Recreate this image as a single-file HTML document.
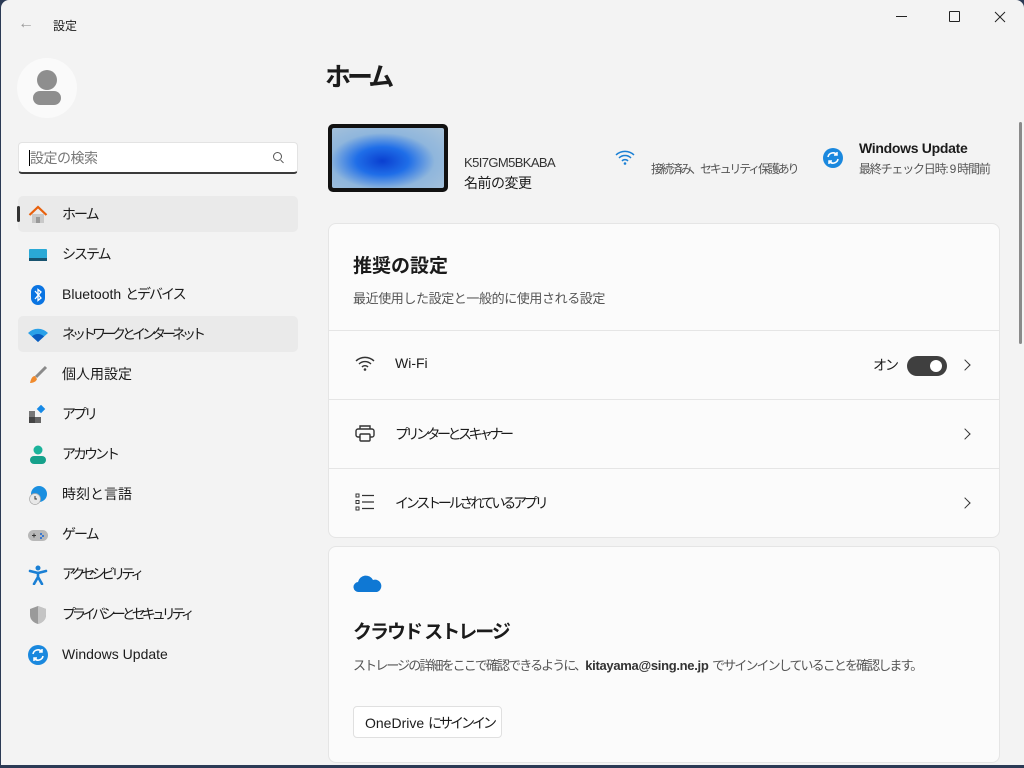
<!DOCTYPE html>
<html><head><meta charset="utf-8"><style>
*{margin:0;padding:0;box-sizing:border-box}
body{width:1024px;height:768px;overflow:hidden;background:#2b3a55;font-family:"Liberation Sans","Noto Sans CJK JP",sans-serif;color:#1b1b1b;position:relative}
.win{position:absolute;left:1px;top:0;width:1023px;height:765px;background:#f3f3f3;border-radius:8px 8px 0 0}
.a{position:absolute}
.t{font-size:14px;white-space:nowrap}
.k{letter-spacing:-2px}
.nav{position:absolute;left:17px;width:280px;height:36px;border-radius:5px}
.nav .ic{position:absolute;left:10px;top:9px;width:20px;height:20px}
.nav .l{position:absolute;left:44px;top:8px;font-size:14px;white-space:nowrap}
.card{position:absolute;left:327px;width:672px;background:#fbfbfb;border:1px solid #e5e5e5;border-radius:8px}
.row{position:absolute;left:0;width:670px;height:69px;border-top:1px solid #e5e5e5}
.row .l{position:absolute;left:66px;top:24px;font-size:14px;white-space:nowrap}
.chev{position:absolute;left:632px;top:27px;width:8px;height:8px;border-right:1.5px solid #333;border-top:1.5px solid #333;transform:rotate(45deg)}
</style></head><body>
<div class="win">
<div class="a" style="left:17px;top:15px;color:#999;font-size:16px">←</div>
<div class="a" style="left:52px;top:17px;font-size:12px">設定</div>
<div class="a" style="left:895px;top:16px;width:11px;border-top:1px solid #222"></div>
<div class="a" style="left:948px;top:11px;width:11px;height:11px;border:1px solid #222;border-radius:1px"></div>
<svg class="a" style="left:993px;top:11px" width="12" height="12" viewBox="0 0 12 12"><path d="M1 1l10 10M11 1L1 11" stroke="#222" stroke-width="1"/></svg>
<div class="a" style="left:1018px;top:122px;width:3px;height:222px;background:#8a8a8a;border-radius:2px"></div>

<div class="a" style="left:16px;top:58px;width:60px;height:60px;border-radius:50%;background:#fafafa"></div>
<div class="a" style="left:36px;top:70px;width:20px;height:20px;border-radius:50%;background:#8e8e8e"></div>
<div class="a" style="left:32px;top:91px;width:28px;height:14px;border-radius:7px;background:#8e8e8e"></div>

<div class="a" style="left:17px;top:142px;width:280px;height:32px;background:#fff;border:1px solid #e3e3e3;border-bottom:2px solid #3a3a3a;border-radius:4px"></div>
<div class="a" style="left:28px;top:150px;width:1px;height:16px;background:#000"></div>
<div class="a" style="left:29px;top:148px;font-size:14px;color:#777;letter-spacing:-0.5px">設定の検索</div>
<div class="a" style="left:272px;top:152px;width:9px;height:9px;border:1.3px solid #555;border-radius:50%"></div>
<div class="a" style="left:279px;top:161px;width:4px;height:1.3px;background:#555;transform:rotate(45deg)"></div>

<div class="nav" style="top:196px;background:#eaeaea"><div class="a" style="left:-1px;top:10px;width:3px;height:16px;background:#333;border-radius:2px"></div>
<svg class="ic" viewBox="0 0 20 20"><path d="M4 9v9h12V9" fill="#c9c9c9"/><path d="M8 18v-6h4v6" fill="#999"/><path d="M1.5 10L10 2l8.5 8" stroke="#e8600c" stroke-width="2.2" fill="none"/></svg><span class="l k">ホーム</span></div>
<div class="nav" style="top:236px"><svg class="ic" viewBox="0 0 20 20"><rect x="1" y="4" width="18" height="12" rx="1" fill="#2aa9d6"/><rect x="1" y="13" width="18" height="3" fill="#18536f"/></svg><span class="l k">システム</span></div>
<div class="nav" style="top:276px"><svg class="ic" viewBox="0 0 20 20"><rect x="3" y="0" width="14" height="20" rx="7" fill="#0a74e2"/><path d="M7 6l6 7-3 2.5V4.5l3 2.5-6 7" stroke="#fff" stroke-width="1.3" fill="none"/></svg><span class="l">Bluetooth <span class="k">とデバイス</span></span></div>
<div class="nav" style="top:316px;background:#eaeaea"><svg class="ic" viewBox="0 0 20 20"><path d="M0 8a14 14 0 0 1 20 0l-10 9z" fill="#2aa0e8"/><path d="M4 11.5a8.5 8.5 0 0 1 12 0l-6 5.5z" fill="#0a5bbf"/></svg><span class="l" style="letter-spacing:-4px">ネットワークとインターネット</span></div>
<div class="nav" style="top:356px"><svg class="ic" viewBox="0 0 20 20"><path d="M18 2L8 12" stroke="#8a8a8a" stroke-width="3"/><path d="M7 11c-3 0-4 3-5 7 3 0 6-1 7-4z" fill="#f08a2c"/></svg><span class="l">個人用設定</span></div>
<div class="nav" style="top:396px"><svg class="ic" viewBox="0 0 20 20"><rect x="1" y="6" width="6" height="6" fill="#777"/><rect x="1" y="12" width="6" height="6" fill="#444"/><rect x="7" y="12" width="6" height="6" fill="#666"/><rect x="10" y="1" width="6" height="6" fill="#1689e6" transform="rotate(45 13 4)"/></svg><span class="l" style="letter-spacing:-3px">アプリ</span></div>
<div class="nav" style="top:436px"><svg class="ic" viewBox="0 0 20 20"><circle cx="10" cy="5" r="4.5" fill="#1bb39b"/><rect x="2" y="11" width="16" height="8" rx="4" fill="#16a18b"/></svg><span class="l" style="letter-spacing:-3px">アカウント</span></div>
<div class="nav" style="top:476px"><svg class="ic" viewBox="0 0 20 20"><circle cx="11" cy="9" r="8" fill="#1a8fe0"/><circle cx="7" cy="14" r="5.5" fill="#e8e8e8" stroke="#aaa" stroke-width=".7"/><path d="M7 11v3h2" stroke="#333" fill="none"/></svg><span class="l">時刻と言語</span></div>
<div class="nav" style="top:516px"><svg class="ic" viewBox="0 0 20 20"><rect x="0" y="5" width="20" height="11" rx="5.5" fill="#b8b8b8"/><path d="M4 10.5h4M6 8.5v4" stroke="#333"/><circle cx="13" cy="9" r="1" fill="#1565d8"/><circle cx="15" cy="11" r="1" fill="#1565d8"/><circle cx="13" cy="13" r="1" fill="#1565d8"/></svg><span class="l k">ゲーム</span></div>
<div class="nav" style="top:556px"><svg class="ic" viewBox="0 0 20 20"><circle cx="10" cy="3" r="2.5" fill="#1a7fd4"/><path d="M2 6l8 2 8-2M10 8v4l-4 7M10 12l4 7" stroke="#1a7fd4" stroke-width="2.6" fill="none" stroke-linecap="round"/></svg><span class="l" style="letter-spacing:-4px">アクセシビリティ</span></div>
<div class="nav" style="top:596px"><svg class="ic" viewBox="0 0 20 20"><path d="M10 1l8 3v6c0 5-4 8-8 9-4-1-8-4-8-9V4z" fill="#9a9a9a"/><path d="M10 1l8 3v6c0 5-4 8-8 9z" fill="#c4c4c4"/></svg><span class="l" style="letter-spacing:-4px">プライバシーとセキュリティ</span></div>
<div class="nav" style="top:636px"><svg class="ic" viewBox="0 0 20 20"><circle cx="10" cy="10" r="10" fill="#1a88de"/><path d="M5 9a5 5 0 0 1 9-2M15 11a5 5 0 0 1-9 2" stroke="#fff" stroke-width="1.6" fill="none"/><path d="M14 4v3h-3M6 16v-3h3" stroke="#fff" stroke-width="1.5" fill="none"/></svg><span class="l" style="top:10px">Windows Update</span></div>

<div class="a" style="left:324px;top:57px;font-size:26px;font-weight:bold;letter-spacing:-4px">ホーム</div>
<div class="a" style="left:327px;top:124px;width:120px;height:68px;background:#111;border-radius:5px"></div>
<div class="a" style="left:331px;top:128px;width:112px;height:60px;border-radius:2px;background:radial-gradient(ellipse at 45% 55%,#0a3fd0 0,#1f6ee8 30%,#8fb6dc 60%,#a9c3da 100%)"></div>
<div class="a t" style="left:463px;top:155px;font-size:13px;color:#333;letter-spacing:-0.6px">K5I7GM5BKABA</div>
<div class="a t" style="left:463px;top:173px;letter-spacing:-0.5px">名前の変更</div>
<svg class="a" style="left:614px;top:149px" width="20" height="16" viewBox="0 0 20 16"><path d="M1 6a13 13 0 0 1 18 0M4 9a8.5 8.5 0 0 1 12 0M7 12a4 4 0 0 1 6 0" stroke="#1a7fd4" stroke-width="1.5" fill="none"/><circle cx="10" cy="14.5" r="1.3" fill="#1a7fd4"/></svg>
<div class="a t" style="left:650px;top:160px;font-size:12px;color:#555;letter-spacing:-2.2px">接続済み、セキュリティ保護あり</div>
<svg class="a" style="left:822px;top:148px" width="20" height="20" viewBox="0 0 20 20"><circle cx="10" cy="10" r="10" fill="#1a88de"/><path d="M5 9a5 5 0 0 1 9-2M15 11a5 5 0 0 1-9 2" stroke="#fff" stroke-width="1.6" fill="none"/><path d="M14 4v3h-3M6 16v-3h3" stroke="#fff" stroke-width="1.5" fill="none"/></svg>
<div class="a t" style="left:858px;top:140px;font-weight:bold;font-size:14px;letter-spacing:-0.3px">Windows Update</div>
<div class="a t" style="left:858px;top:160px;font-size:12px;color:#555;letter-spacing:-1.2px">最終チェック日時: 9 時間前</div>

<div class="card" style="top:223px;height:315px">
<div class="a" style="left:24px;top:27px;font-size:19px;font-weight:bold">推奨の設定</div>
<div class="a t" style="left:24px;top:64px;font-size:13px;color:#555;letter-spacing:-0.4px">最近使用した設定と一般的に使用される設定</div>
<div class="row" style="top:106px"><svg class="a" style="left:26px;top:24px" width="20" height="16" viewBox="0 0 20 16"><path d="M1 6a13 13 0 0 1 18 0M4 9a8.5 8.5 0 0 1 12 0M7 12a4 4 0 0 1 6 0" stroke="#333" stroke-width="1.4" fill="none"/><circle cx="10" cy="14.5" r="1.3" fill="#333"/></svg><span class="l">Wi-Fi</span>
<span class="a t" style="left:544px;top:24px;letter-spacing:-2px">オン</span><div class="a" style="left:578px;top:25px;width:40px;height:20px;background:#3f3f3f;border-radius:10px"></div><div class="a" style="left:601px;top:29px;width:12px;height:12px;background:#fff;border-radius:50%"></div><div class="chev" style="left:632px;top:30px"></div></div>
<div class="row" style="top:175px"><svg class="a" style="left:26px;top:24px" width="20" height="18" viewBox="0 0 20 18"><path d="M5 5V2h10v3M5 13H3a2 2 0 0 1-2-2V7a2 2 0 0 1 2-2h14a2 2 0 0 1 2 2v4a2 2 0 0 1-2 2h-2" stroke="#333" stroke-width="1.4" fill="none"/><rect x="5" y="10" width="10" height="7" rx="1" stroke="#333" stroke-width="1.4" fill="none"/></svg><span class="l" style="letter-spacing:-3.5px">プリンターとスキャナー</span><div class="chev" style="top:30px"></div></div>
<div class="row" style="top:244px"><svg class="a" style="left:26px;top:24px" width="20" height="18" viewBox="0 0 20 18"><rect x="1" y="1" width="3" height="3" stroke="#333" fill="none"/><rect x="1" y="7.5" width="3" height="3" stroke="#333" fill="none"/><rect x="1" y="14" width="3" height="3" stroke="#333" fill="none"/><path d="M7 2.5h12M7 9h12M7 15.5h12" stroke="#333" stroke-width="1.3"/></svg><span class="l" style="letter-spacing:-3.2px">インストールされているアプリ</span><div class="chev" style="top:30px"></div></div>
</div>

<div class="card" style="top:546px;height:217px">
<svg class="a" style="left:24px;top:27px" width="30" height="19" viewBox="0 0 30 19"><path d="M6 18a5 5 0 0 1-1-10 8 8 0 0 1 15-2 6 6 0 0 1 4 12z" fill="#0f78d4"/></svg>
<div class="a" style="left:24px;top:70px;font-size:19px;font-weight:bold;letter-spacing:-2px">クラウド ストレージ</div>
<div class="a t" style="left:24px;top:108px;font-size:13px;color:#555"><span style="letter-spacing:-1.9px">ストレージの詳細をここで確認できるように、</span><b style="color:#333;letter-spacing:-0.3px">kitayama@sing.ne.jp</b> <span style="letter-spacing:-1.9px">でサインインしていることを確認します。</span></div>
<div class="a" style="left:24px;top:159px;width:149px;height:32px;background:#fff;border:1px solid #e0e0e0;border-radius:4px;font-size:14px;padding:6px 0 0 11px;white-space:nowrap">OneDrive <span style="letter-spacing:-3px">にサインイン</span></div>
</div>
</div>
</body></html>
